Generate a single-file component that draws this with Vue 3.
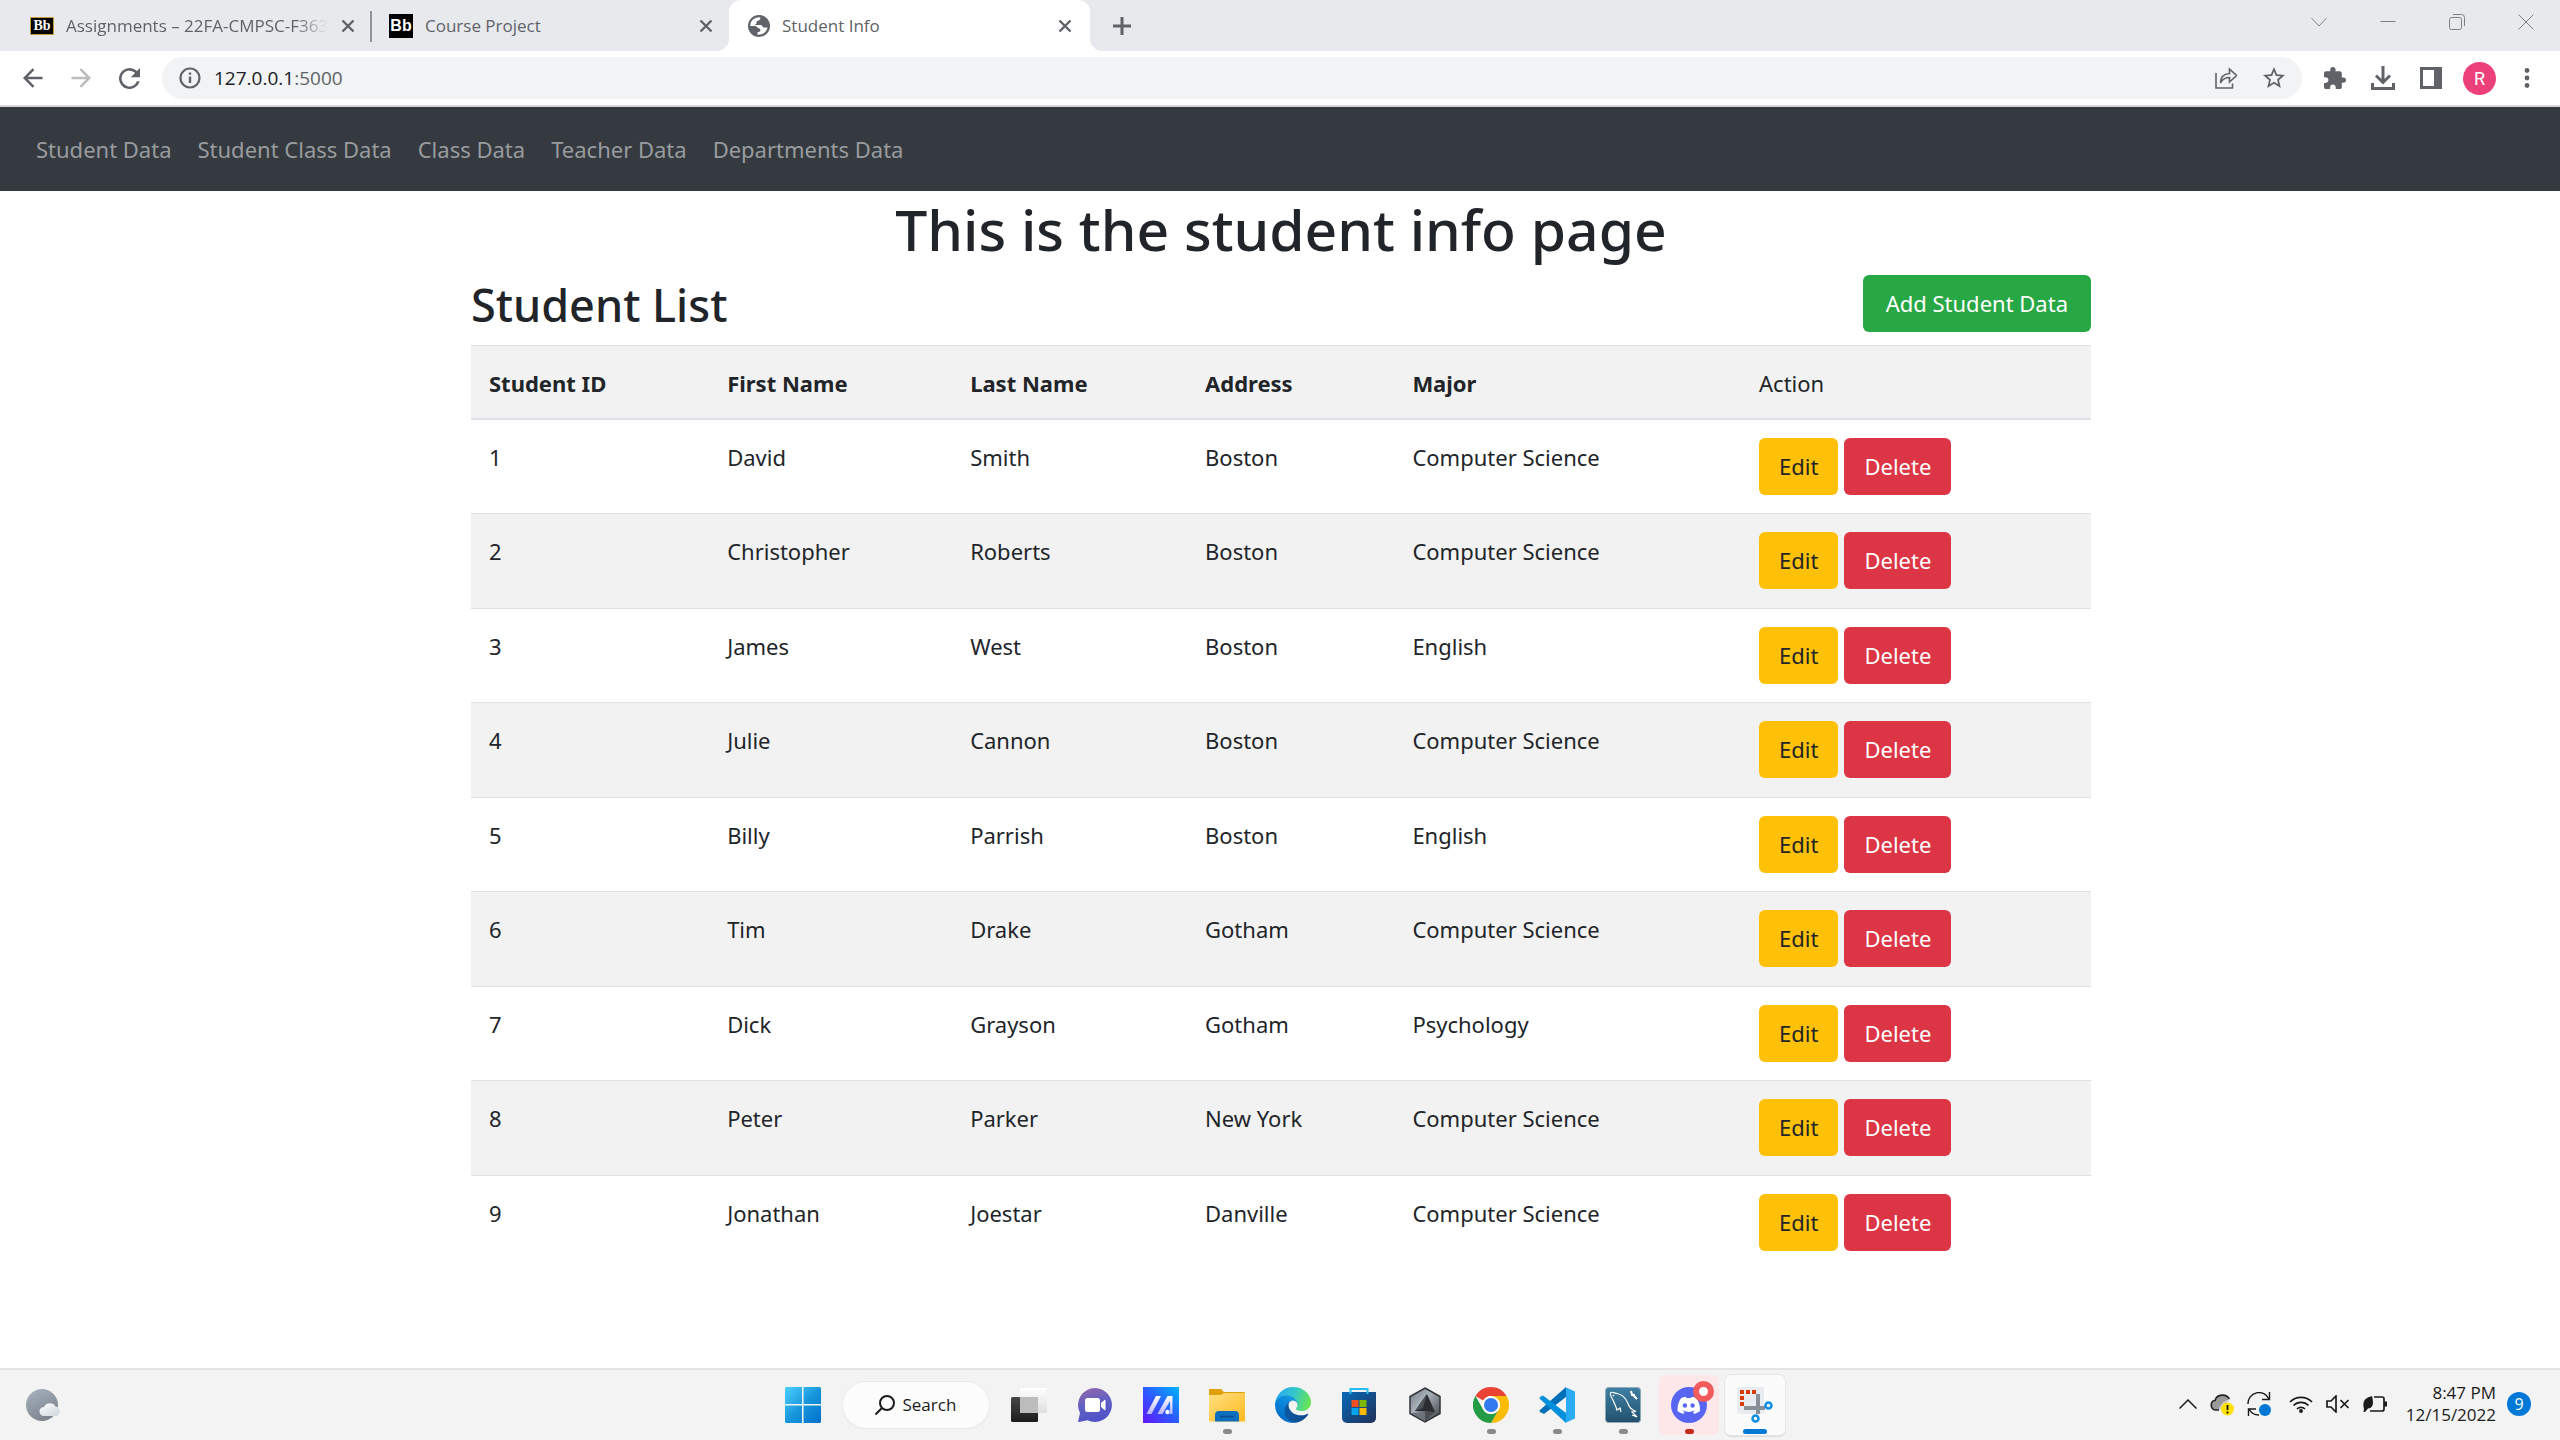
<script setup>
import { ref } from 'vue'

const address = ref('127.0.0.1:5000')
const links = ['Student Data', 'Student Class Data', 'Class Data', 'Teacher Data', 'Departments Data']
const students = [
  [1, 'David', 'Smith', 'Boston', 'Computer Science'],
  [2, 'Christopher', 'Roberts', 'Boston', 'Computer Science'],
  [3, 'James', 'West', 'Boston', 'English'],
  [4, 'Julie', 'Cannon', 'Boston', 'Computer Science'],
  [5, 'Billy', 'Parrish', 'Boston', 'English'],
  [6, 'Tim', 'Drake', 'Gotham', 'Computer Science'],
  [7, 'Dick', 'Grayson', 'Gotham', 'Psychology'],
  [8, 'Peter', 'Parker', 'New York', 'Computer Science'],
  [9, 'Jonathan', 'Joestar', 'Danville', 'Computer Science'],
]
</script>

<template>
  <div class="screen">
    <header class="browser">
      <div class="tabs">
        <div class="tab first">
          <span class="fav-gold">Bb</span>
          <span class="title fade">Assignments – 22FA-CMPSC-F363</span>
          <button class="x" aria-label="Close tab"><svg viewBox="0 0 14 14" width="14" height="14"><path d="M1.5 1.5l11 11M12.5 1.5l-11 11" stroke="#5f6368" stroke-width="2.4" /></svg></button>
        </div>
        <div class="tab second">
          <span class="fav-black">Bb</span>
          <span class="title">Course Project</span>
          <button class="x" aria-label="Close tab"><svg viewBox="0 0 14 14" width="14" height="14"><path d="M1.5 1.5l11 11M12.5 1.5l-11 11" stroke="#5f6368" stroke-width="2.4" /></svg></button>
        </div>
        <div class="tab active">
          <svg viewBox="0 0 22 22" width="22" height="22"><circle cx="11" cy="11" r="11" fill="#5f6368" /><path fill="#fff" d="M2.300 11C2 6 6.500 2.200 12 2.300c1 1.700 0 3-2 3.400-1.500.4-1.500 1-1.500 2.300 0 1-1 1.500-2 2h6c1.500 0 2 1 2.500 2.500h4.500c-.5 4-4.500 7.500-10 7.200v-2.500c2-.2 3-1 3-2.200 0-1.500-1.500-1.500-2.500-2L8 11z" /></svg>
          <span class="title">Student Info</span>
          <button class="x" aria-label="Close tab"><svg viewBox="0 0 14 14" width="14" height="14"><path d="M1.5 1.5l11 11M12.5 1.5l-11 11" stroke="#5f6368" stroke-width="2.4" /></svg></button>
        </div>
        <button class="plus" aria-label="New tab"><svg viewBox="0 0 18 18" width="18" height="18"><path d="M9 0v18M0 9h18" stroke="#5f6368" stroke-width="3" /></svg></button>
        <div class="window-buttons">
          <button aria-label="Search tabs"><svg viewBox="0 0 16 16" width="16" height="16" fill="none" stroke="#7d8085"><path d="M.5 4l7.500 8 7.500-8" /></svg></button>
          <button aria-label="Minimize"><svg viewBox="0 0 16 16" width="16" height="16" fill="none" stroke="#7d8085"><path d="M.5 7.500h15" /></svg></button>
          <button aria-label="Restore"><svg viewBox="0 0 16 16" width="16" height="16" fill="none" stroke="#7d8085"><rect x=".5" y="3.500" width="12" height="12" rx="2" /><path d="M4 .500h8.500a3 3 0 0 1 3 3V12" /></svg></button>
          <button aria-label="Close"><svg viewBox="0 0 16 16" width="16" height="16" fill="none" stroke="#7d8085"><path d="M.5.5l15 15M15.500.5l-15 15" /></svg></button>
        </div>
      </div>
      <div class="toolbar">
        <div class="history">
          <button aria-label="Back"><svg viewBox="0 0 20 20" width="20" height="20" fill="none" stroke="#5f6368" stroke-width="2.500"><path d="M19.500 10H2M10.500 1.200L1.700 10l8.800 8.800" /></svg></button>
          <button aria-label="Forward"><svg viewBox="0 0 20 20" width="20" height="20" fill="none" stroke="#babcbe" stroke-width="2.500"><path d="M.5 10H18M9.500 1.200l8.800 8.800-8.800 8.800" /></svg></button>
          <button aria-label="Reload"><svg viewBox="4 4 16 16" width="21" height="21"><path fill="#5f6368" d="M17.650 6.350A7.950 7.950 0 0 0 12 4a8 8 0 1 0 7.730 10h-2.080A6 6 0 1 1 12 6c1.660 0 3.140.69 4.220 1.780L13 11h7V4z" /></svg></button>
        </div>
        <div class="omnibox">
          <svg viewBox="0 0 22 22" width="22" height="22"><circle cx="11" cy="11" r="9.500" fill="none" stroke="#5f6368" stroke-width="2.200" /><path d="M11 9.500V16M11 5.500v2.300" stroke="#5f6368" stroke-width="2.400" /></svg>
          <label class="address"><span aria-hidden="true">127.0.0.1<i>:5000</i></span><input v-model="address" aria-label="Address" /></label>
          <svg class="share" viewBox="0 0 22 22" width="22" height="22" fill="none" stroke="#5f6368" stroke-width="1.600"><path d="M1 6v15h16.500v-4.500M5.500 16c0-6 3-9 9-9.500V2l7 6.500-7 6.500v-4.500c-4.500 0-7 1.500-9 5.500z" /></svg>
          <svg viewBox="2 2 20 20" width="22" height="22"><path fill="#5f6368" d="M22 9.240l-7.190-.62L12 2 9.190 8.630 2 9.240l5.460 4.730L5.820 21 12 17.270 18.180 21l-1.630-7.030L22 9.240zM12 15.400l-3.760 2.270 1-4.280-3.320-2.880 4.380-.38L12 6.100l1.710 4.040 4.380.38-3.320 2.880 1 4.280L12 15.400z" /></svg>
        </div>
        <div class="tools">
          <button aria-label="Extensions"><svg viewBox="2 1 21 21" width="22" height="22"><path fill="#5f6368" d="M20.500 11H19V7c0-1.100-.9-2-2-2h-4V3.500a2.500 2.500 0 0 0-5 0V5H4c-1.100 0-1.990.9-1.990 2v3.800H3.500c1.490 0 2.700 1.210 2.700 2.700s-1.210 2.700-2.700 2.700H2V20c0 1.100.9 2 2 2h3.800v-1.500c0-1.490 1.210-2.700 2.700-2.700s2.700 1.210 2.700 2.700V22H17c1.100 0 2-.9 2-2v-4h1.500a2.500 2.500 0 0 0 0-5z" /></svg></button>
          <button aria-label="Downloads"><svg viewBox="0 0 24 24" width="24" height="24" fill="none" stroke="#5f6368" stroke-width="3"><path d="M12 0v16M5 9.500l7 7 7-7M1.500 17v5.500h21V17" /></svg></button>
          <button aria-label="Side panel"><svg viewBox="0 0 22 22" width="22" height="22"><path fill="#5f6368" fill-rule="evenodd" d="M0 0h22v22H0zM3 3v16h11V3z" /></svg></button>
          <button class="avatar" aria-label="Profile">R</button>
          <button aria-label="Menu"><svg viewBox="0 0 6 20" width="6" height="20" fill="#5f6368"><circle cx="3" cy="2.500" r="2.400" /><circle cx="3" cy="10" r="2.400" /><circle cx="3" cy="17.500" r="2.400" /></svg></button>
        </div>
      </div>
    </header>

    <nav class="navbar">
      <a v-for="l in links" :key="l" href="#">{{ l }}</a>
    </nav>

    <main>
      <h1>This is the student info page</h1>
      <section class="container">
        <div class="heading">
          <h2>Student List</h2>
          <button class="btn success">Add Student Data</button>
        </div>
        <table>
          <colgroup><col class="c-id" /><col class="c-first" /><col class="c-last" /><col class="c-address" /><col class="c-major" /><col /></colgroup>
          <thead>
            <tr><th>Student ID</th><th>First Name</th><th>Last Name</th><th>Address</th><th>Major</th><td>Action</td></tr>
          </thead>
          <tbody>
            <tr v-for="s in students" :key="s[0]">
              <td v-for="(v, i) in s" :key="i">{{ v }}</td>
              <td class="action-cell">
                <div class="actions"><button class="btn warning">Edit</button><button class="btn danger">Delete</button></div>
              </td>
            </tr>
          </tbody>
        </table>
      </section>
    </main>

    <footer class="taskbar">
      <button class="weather" aria-label="Weather">
        <svg viewBox="0 0 34 32" width="34" height="32">
          <defs>
            <linearGradient id="moon" x1="0" y1="0" x2="0.500" y2="1"><stop offset="0" stop-color="#a9b4bf" /><stop offset="1" stop-color="#7d858f" /></linearGradient>
            <linearGradient id="cloud" x1="0" y1="0" x2="1" y2="1"><stop offset="0" stop-color="#fff" /><stop offset="1" stop-color="#ccd5dc" /></linearGradient>
          </defs>
          <circle cx="16" cy="16" r="16" fill="url(#moon)" />
          <path fill="url(#cloud)" d="M18 27a4.500 4.500 0 0 1 0-9 6.500 6.500 0 0 1 11.500-.5A4.800 4.800 0 0 1 29.500 27z" />
        </svg>
      </button>

      <div class="apps">
        <button class="app" aria-label="Start">
          <svg viewBox="0 0 35 35" width="36" height="36"><defs><linearGradient id="win" x1="0" y1="0" x2="1" y2="1"><stop offset="0" stop-color="#4fd0ff" /><stop offset=".5" stop-color="#1897dc" /><stop offset="1" stop-color="#0070cc" /></linearGradient></defs><path fill="url(#win)" d="M1 0h15.500v16.500H0V1zM18 0h16l1 1v15.500H18zM0 18h16.500v17H1l-1-1zM18 18h17v16l-1 1H18z" /></svg>
        </button>
        <button class="search">
          <svg viewBox="0 0 20 20" width="20" height="20" fill="none" stroke="#1b1b1b" stroke-width="2"><circle cx="12" cy="8" r="7" /><path d="M7 13l-6.500 6.500" /></svg>
          Search
        </button>
        <button class="app" aria-label="Task view">
          <svg viewBox="0 0 36 36" width="36" height="36"><defs><linearGradient id="dark" x1="0" y1="0" x2="0" y2="1"><stop offset="0" stop-color="#484848" /><stop offset="1" stop-color="#1c1c1c" /></linearGradient><linearGradient id="light" x1="0" y1="0" x2="0" y2="1"><stop offset="0" stop-color="#fff" /><stop offset="1" stop-color="#dedede" /></linearGradient></defs><rect y="10" width="27" height="25" rx="1.500" fill="url(#dark)" /><rect x="9" y="1" width="27" height="25" rx="1" fill="url(#light)" /><path d="M9 10h18v16H9z" fill="#bcbcbc" /></svg>
        </button>
        <button class="app" aria-label="Chat">
          <svg viewBox="0 0 36 36" width="36" height="36"><defs><linearGradient id="chat" x1="0.200" y1="0" x2="0.500" y2="1"><stop offset="0" stop-color="#9268ac" /><stop offset=".5" stop-color="#605fc4" /><stop offset="1" stop-color="#4f52c8" /></linearGradient></defs><path fill="url(#chat)" d="M18 1a17 17 0 1 1-7.500 32.300L2 35c-1 0-1-.6-.7-1.300L3 26A17 17 0 0 1 18 1z" /><rect x="8" y="11" width="15" height="14" rx="2.500" fill="#fff" /><path d="M24 16l3.500-3q1-.5 1 .5v9q0 1-1 .5L24 20z" fill="#fff" /></svg>
        </button>
        <button class="app" aria-label="MyASUS">
          <svg viewBox="0 0 36 36" width="36" height="36"><defs><linearGradient id="asus" x1="0" y1="1" x2="1" y2="0"><stop offset="0" stop-color="#6413ff" /><stop offset=".5" stop-color="#2b5cff" /><stop offset="1" stop-color="#00b4ff" /></linearGradient><linearGradient id="bars" x1="0" y1="0" x2="0" y2="1"><stop offset="0" stop-color="#fff" /><stop offset="1" stop-color="#b9b4ff" /></linearGradient></defs><path fill="url(#asus)" d="M0 0h36v36H0z" /><path fill="url(#bars)" d="M13 9h5L8.500 27h-5zM24.500 9h5v18h-2.500V14L19.500 27h-5z" /><circle cx="24.500" cy="25" r="2.200" fill="#fff" /></svg>
        </button>
        <button class="app running" aria-label="File Explorer">
          <svg viewBox="0 0 36 36" width="36" height="36"><defs><linearGradient id="folder" x1="0" y1="0" x2="1" y2="1"><stop offset="0" stop-color="#ffe083" /><stop offset="1" stop-color="#ffb91d" /></linearGradient></defs><path fill="#dfa00a" d="M0 3q0-1 1-1h11l3 3h20q1 0 1 1v4H0z" /><path fill="url(#folder)" d="M0 8h12l3-2h21v28.500H0z" /><path fill="#0c6ebd" d="M6 34.500V28q0-4 4-4h16q4 0 4 4v6.500z" /><path d="M11 29.500h14" stroke="#064b8e" stroke-width="1.500" /></svg>
        </button>
        <button class="app" aria-label="Edge">
          <svg viewBox="0 0 256 256" width="36" height="36"><defs><linearGradient id="e1" x1="0" y1="0" x2="1" y2="0"><stop offset="0" stop-color="#0c59a4" /><stop offset="1" stop-color="#114a8b" /></linearGradient><linearGradient id="e2" x1=".8" y1="0" x2=".3" y2="1"><stop offset="0" stop-color="#1b9de2" /><stop offset=".5" stop-color="#0883d9" /><stop offset="1" stop-color="#0667c0" /></linearGradient><linearGradient id="e3" x1="0" y1=".3" x2="1" y2=".5"><stop offset="0" stop-color="#2aa9ec" /><stop offset=".5" stop-color="#33c5cf" /><stop offset="1" stop-color="#6ae651" /></linearGradient></defs><path fill="url(#e1)" d="M231 190.500c-3.400 1.800-6.900 3.400-10.500 4.700a101.500 101.500 0 0 1-35.800 6.500c-47.200 0-88.300-32.500-88.300-74.100 0-11.400 6.200-21.900 16.200-27.400-42.700 1.800-53.700 46.300-53.700 72.400 0 73.700 67.900 81.100 82.600 81.100 7.900 0 19.800-2.300 27-4.600l1.300-.4a128 128 0 0 0 66.600-52.800 4 4 0 0 0-5.400-5.400z" /><path fill="url(#e2)" d="M105.700 241.400A79.200 79.200 0 0 1 83 220a80.700 80.700 0 0 1 29.500-120c3.200-1.500 8.500-4.100 15.600-4a32.400 32.400 0 0 1 25.700 13 31.900 31.900 0 0 1 6.300 18.700c0-.2 24.500-79.600-80-79.600C36.100 48.100 0 89.800 0 126.200a130.500 130.500 0 0 0 12.100 56 128 128 0 0 0 156.400 67 75.500 75.500 0 0 1-62.800-7.800z" /><path fill="url(#e3)" d="M152.300 148.900c-.8 1-3.300 2.500-3.300 5.700 0 2.600 1.700 5.100 4.700 7.200 14.400 10 41.500 8.700 41.600 8.700a59.600 59.600 0 0 0 30.300-8.400A61.400 61.400 0 0 0 256 109.300c.3-22.400-8-37.300-11.300-43.900C223.500 23.900 177.700 0 128 0A128 128 0 0 0 0 126.200c.5-36.500 36.800-66 80-66 3.500 0 23.500.3 42 10.100 16.300 8.600 24.900 18.900 30.800 29.200 6.200 10.700 7.300 24.100 7.300 29.500s-2.700 13.300-7.800 19.900z" /></svg>
        </button>
        <button class="app" aria-label="Microsoft Store">
          <svg viewBox="0 0 36 36" width="36" height="36"><defs><linearGradient id="store" x1="0" y1="0" x2="1" y2="1"><stop offset="0" stop-color="#0969b9" /><stop offset="1" stop-color="#203057" /></linearGradient></defs><path fill="url(#store)" d="M1 5h34v26a5 5 0 0 1-5 5H6a5 5 0 0 1-5-5z" /><path d="M9.500 7V2h17v5" fill="none" stroke="#23bdf2" stroke-width="2" /><path fill="#f25022" d="M10.500 13h7v7h-7z" /><path fill="#7fba00" d="M18.500 13h7v7h-7z" /><path fill="#00a4ef" d="M10.500 21h7v7h-7z" /><path fill="#ffb900" d="M18.500 21h7v7h-7z" /></svg>
        </button>
        <button class="app" aria-label="Armoury Crate">
          <svg viewBox="0 0 36 36" width="36" height="36"><defs><linearGradient id="hex" x1="0" y1="0" x2="1" y2="1"><stop offset="0" stop-color="#6d7580" /><stop offset=".4" stop-color="#aab2bb" /><stop offset="1" stop-color="#3a3d42" /></linearGradient></defs><path fill="url(#hex)" stroke="#303338" stroke-width="1.500" d="M18 1l15 8.500v17L18 35 3 26.500v-17z" /><path fill="#292c31" d="M20 7l8 18-20-1z" /><path fill="#4b5057" d="M20 7L8 24l8-3z" /><path fill="#6d747c" d="M4 26l14-1v9z" /><path fill="#4a4e54" d="M18 25l10 0-10 9z" /></svg>
        </button>
        <button class="app running" aria-label="Chrome">
          <svg viewBox="0 0 48 48" width="36" height="36"><path fill="#ea4335" d="M24 0a24 24 0 0 1 20.800 12H24a12 12 0 0 0-10.400 6L3.200 12A24 24 0 0 1 24 0z" /><path fill="#fbbc05" d="M44.800 12A24 24 0 0 1 24 48l10.400-18A12 12 0 0 0 34.400 18L24 12z" /><path fill="#249b45" d="M24 48A24 24 0 0 1 3.200 12l10.400 18a12 12 0 0 0 20.800 0z" /><circle cx="24" cy="24" r="12" fill="#fff" /><circle cx="24" cy="24" r="9.400" fill="#317aef" /></svg>
        </button>
        <button class="app running" aria-label="Visual Studio Code">
          <svg viewBox="0 0 36 36" width="36" height="36"><path fill="#0070b9" d="M27 0v10L5 27l-4-2q-1-1 0-2z" /><path fill="#0090dc" d="M1 12q-1-1 0-2l3-1.500L27 26v10z" /><path fill="#2aabf3" d="M26 0l10 4.500v27L26 36q1-1 1-3V3q0-2-1-3z" /></svg>
        </button>
        <button class="app running" aria-label="MySQL Workbench">
          <svg viewBox="0 0 36 36" width="36" height="36"><defs><linearGradient id="sql" x1="0" y1="0" x2="0" y2="1"><stop offset="0" stop-color="#3f80a4" /><stop offset="1" stop-color="#22516e" /></linearGradient></defs><rect x=".5" y=".5" width="35" height="35" rx="3" fill="url(#sql)" stroke="#8fa9b8" /><path fill="none" stroke="#fff" stroke-width="1.200" d="M16 25l-1-4-3 2c-1-4-3-7-4-10C6 9 4 7 6 5.500c2-1 4 1 6 1 6 1 9 5 11 10 1 4 3 6 8 8l-4 .5 5 5-5-2M8 8l1 1" /><path d="M26 4l1 4 3 0M27 7l5 5" stroke="#fff" stroke-width="2" fill="none" /></svg>
        </button>
        <button class="app running alert" aria-label="Discord">
          <svg viewBox="0 0 36 36" width="36" height="36"><circle cx="18" cy="18" r="18" fill="#5865f2" /><path fill="#fff" d="M25.500 11.200a18 18 0 0 0-4.700-1.400l-.7 1.300a17 17 0 0 0-4.700 0l-.7-1.300a18 18 0 0 0-4.700 1.400C7 15.700 6.200 20 6.600 24.300a18 18 0 0 0 5.700 2.700l1.300-2-2-1 .5-.4a13 13 0 0 0 11.300 0l.5.4-2 1 1.300 2a18 18 0 0 0 5.700-2.700c.5-5-.8-9.300-3.400-13.100z" /><circle cx="13.900" cy="18.500" r="2.200" fill="#5865f2" /><circle cx="21.600" cy="18.500" r="2.200" fill="#5865f2" /></svg>
          <span class="dot"></span>
        </button>
        <button class="app running current" aria-label="Snipping Tool">
          <svg viewBox="0 0 36 36" width="36" height="36"><rect width="27" height="27" rx="2" fill="#e8ebef" /><path d="M3 5h16M5 3v16" stroke="#d83b01" stroke-width="4" stroke-dasharray="4 2" fill="none" /><path d="M21 7v20M7 21h21" stroke="#8a9097" stroke-width="4" fill="none" /><circle cx="31.500" cy="18.500" r="3" fill="#fff" stroke="#0f8fe0" stroke-width="2.500" /><circle cx="18.500" cy="31.500" r="3" fill="#fff" stroke="#0f8fe0" stroke-width="2.500" /></svg>
        </button>
      </div>

      <div class="tray">
        <svg viewBox="0 0 18 10" width="18" height="10" fill="none" stroke="#1b1b1b" stroke-width="1.500"><path d="M.5 9.500L9 1l8.500 8.500" /></svg>
        <svg viewBox="0 0 24 24" width="24" height="24"><path d="M9 18H5C0 17 0 9 5 8.500c2-7 12-7 14.500-1l-3 3z" fill="#9a9a9a" /><path d="M9 18H5C0 17 0 9 5 8.500c2-7 12-7 14.500-1" fill="none" stroke="#222" stroke-width="1.600" /><path d="M9 17l4-6 7-4" stroke="#ddd" fill="#bbb" /><circle cx="17.500" cy="17" r="6.500" fill="#ffe000" /><path d="M17.500 13v5M17.500 19.500v2" stroke="#111" stroke-width="1.800" /></svg>
        <svg viewBox="0 0 24 24" width="24" height="24" fill="none" stroke="#1b1b1b" stroke-width="1.400"><path d="M1 12A11 11 0 0 1 22 7M22.500 0v7.500H15M1.500 24v-7H9M2 17a11 11 0 0 0 10 6" /><circle cx="18" cy="18" r="6" fill="#0078d7" stroke="none" /></svg>
        <svg class="wifi" viewBox="0 0 24 18" width="24" height="18" fill="none" stroke="#1b1b1b" stroke-width="1.700"><path d="M1 7a15.500 15.500 0 0 1 22 0M4.500 10.500a10.500 10.500 0 0 1 15 0M8 14a5.700 5.700 0 0 1 8 0" /><circle cx="12" cy="16" r="1.900" fill="#1b1b1b" stroke="none" /></svg>
        <svg viewBox="0 0 24 18" width="24" height="18" fill="none" stroke="#1b1b1b" stroke-width="1.700"><path d="M1 6h4l5-5v16l-5-5H1zM14.500 5l8 8M22.500 5l-8 8" /></svg>
        <svg viewBox="0 0 24 18" width="24" height="18"><path d="M11 2h8q2 0 2 2v10q0 2-2 2H7" fill="none" stroke="#1b1b1b" stroke-width="1.700" /><path fill="#1b1b1b" d="M21 6.500h3v5h-3zM1 14C-1 6 2 3 9 1c2 8 1 12-4 12.500L2 17H.5z" /></svg>
        <div class="clock"><time>8:47 PM</time><time>12/15/2022</time></div>
        <span class="count">9</span>
      </div>
    </footer>
  </div>
</template>

<style>
body { margin: 0; background: #fff; }
</style>

<style scoped>
.screen {
  min-height: 100vh;
  display: flex;
  flex-direction: column;
  font-family: "Noto Sans", "Open Sans", sans-serif;
  font-size: 22px;
  line-height: 36px;
  color: #212529;
}
button { font: inherit; color: inherit; border: 0; padding: 0; margin: 0; background: none; }
svg { display: block; flex: none; }
.browser { border-bottom: 2px solid #d5d6d8; font-family: "Open Sans", "Noto Sans", sans-serif; }
.tabs { display: flex; height: 51px; background: #e8e9ed; font-size: 17px; line-height: 24px; color: #5f6368; }
.tab { display: flex; align-items: center; gap: 12px; box-sizing: border-box; }
.tab .x { margin-left: auto; }
.first { width: 372px; padding: 0 17px 0 30px; position: relative; }
.first::after { content: ""; position: absolute; right: 0; top: 11px; width: 2px; height: 31px; background: #909399; }
.second { width: 357px; padding: 0 16px 0 17px; }
.active { position: relative; width: 361px; padding: 0 18px 0 19px; background: #fff; border-radius: 12px 12px 0 0; }
.active::before, .active::after { content: ""; position: absolute; bottom: 0; width: 12px; height: 12px; }
.active::before { left: -12px; background: radial-gradient(circle at 0 0, #e8e9ed 12px, #fff 12px); }
.active::after { right: -12px; background: radial-gradient(circle at 100% 0, #e8e9ed 12px, #fff 12px); }
.title { white-space: nowrap; overflow: hidden; }
.fade { width: 264px; mask-image: linear-gradient(to right, #000 230px, transparent 262px); }
.fav-gold, .fav-black { flex: none; box-sizing: border-box; width: 24px; background: #000; color: #fff; text-align: center; }
.fav-gold { height: 18px; border: 1px solid #c79c37; border-radius: 1px; font: bold 14px/15px "Liberation Serif", serif; }
.fav-black { height: 24px; font: bold 16px/24px "Liberation Sans", sans-serif; }
.plus { margin-left: 23px; }
.window-buttons { margin-left: auto; padding: 14px 26px 0 0; display: flex; align-items: flex-start; gap: 53px; }
.toolbar { display: flex; align-items: center; height: 54px; background: #fff; }
.history { display: flex; align-items: center; gap: 28px; width: 139px; padding-left: 23px; }
.omnibox { flex: 1; display: flex; align-items: center; gap: 26px; height: 42px; box-sizing: border-box; padding: 0 17px; border-radius: 21px; background: #f1f3f4; }
.address { position: relative; flex: 1; margin-left: -13px; font-size: 19px; line-height: 28px; color: #202124; }
.address i { font-style: normal; color: #5f6368; }
.address input { position: absolute; inset: 0; width: 100%; box-sizing: border-box; border: 0; padding: 0; background: none; font: inherit; color: transparent; outline: 0; }
.tools { display: flex; align-items: center; gap: 25px; padding: 0 30px 0 22px; }
.tools button:last-child { margin-left: 3px; }
.avatar { width: 33px; height: 33px; margin-left: -4px; border-radius: 50%; background: #ec407a; color: #fff; font: 18px/33px Roboto, sans-serif; }
.navbar { display: flex; align-items: center; gap: 26px; height: 84px; padding: 0 36px; background: #343a40; }
.navbar a { color: #999c9f; text-decoration: none; }
main { flex: 1; padding: 0 0 90px 2px; }
h1, h2 { margin: 0; font-weight: 500; }
h1 { font-size: 57px; line-height: 76px; text-align: center; margin-bottom: 8px; }
.container { width: 1620px; max-width: 100%; margin: 0 auto; }
.heading { display: flex; justify-content: space-between; align-items: flex-start; height: 70px; }
h2 { font-size: 45px; line-height: 60px; }
.btn { height: 57px; padding: 0 20px; border-radius: 6px; line-height: 57px; white-space: nowrap; }
.success { padding: 0 23px; background: #28a745; color: #fff; }
.warning { background: #ffc107; color: #212529; }
.danger { background: #dc3545; color: #fff; }
table { width: 100%; table-layout: fixed; border-collapse: separate; border-spacing: 0; }
.c-id { width: 14.7%; } .c-first { width: 15%; } .c-last { width: 14.5%; } .c-address { width: 12.8%; } .c-major { width: 21.4%; }
th, td { box-sizing: border-box; padding: 19px 18px 0; text-align: left; vertical-align: top; border-top: 1px solid #dee2e6; }
thead th, thead td { height: 75px; border-bottom: 2px solid #dee2e6; background: #f2f2f2; }
tbody td { height: 94px; }
tbody tr:nth-child(even) td { height: 95px; background: #f2f2f2; }
tbody tr:first-child td { height: 93px; border-top: 0; }
.action-cell { padding-top: 18px; }
.actions { display: flex; gap: 6px; }
.taskbar { display: flex; align-items: center; height: 72px; box-sizing: border-box; padding-left: 9px; border-top: 2px solid #e4e4e4; background: #f3f3f3; color: #1b1b1b; font-family: "Open Sans", "Noto Sans", sans-serif; font-size: 17px; line-height: 22px; }
.weather { flex: 1; padding-left: 17px; }
.apps { display: flex; align-items: center; gap: 6px; }
.app { position: relative; width: 60px; height: 60px; display: flex; align-items: center; justify-content: center; border-radius: 6px; }
.running::after { content: ""; position: absolute; bottom: 1px; left: 50%; width: 9px; height: 5px; margin-left: -4px; border-radius: 3px; background: #8a8a8a; }
.alert { background: #fde7e9; }
.alert::after { background: #c42b1c; }
.current { background: #fbfbfb; box-shadow: 0 0 0 1px #e6e6e6, 0 2px 1px #dcdcdc; }
.current::after { width: 24px; margin-left: -12px; background: #0078d4; }
.dot { position: absolute; right: 5px; top: 6px; width: 9px; height: 9px; border: 6px solid #f15b5b; border-radius: 50%; background: #fff; }
.search { box-sizing: border-box; display: flex; align-items: center; gap: 8px; height: 46px; width: 146px; margin: 0 4px; padding-left: 32px; border-radius: 23px; background: #fcfcfc; box-shadow: 0 0 0 1px #ebebeb, 0 1px 1px #dedede; }
.tray { flex: 1; display: flex; align-items: center; justify-content: flex-end; gap: 13px; padding: 0 29px 2px 0; box-sizing: border-box; }
.weather { box-sizing: border-box; }
.tray .wifi { margin-left: 5px; }
.clock { width: 96px; display: flex; flex-direction: column; align-items: flex-end; }
.count { width: 24px; height: 24px; margin-left: -2px; border-radius: 50%; background: #0078d7; color: #fff; text-align: center; font-size: 16px; line-height: 24px; }
</style>
